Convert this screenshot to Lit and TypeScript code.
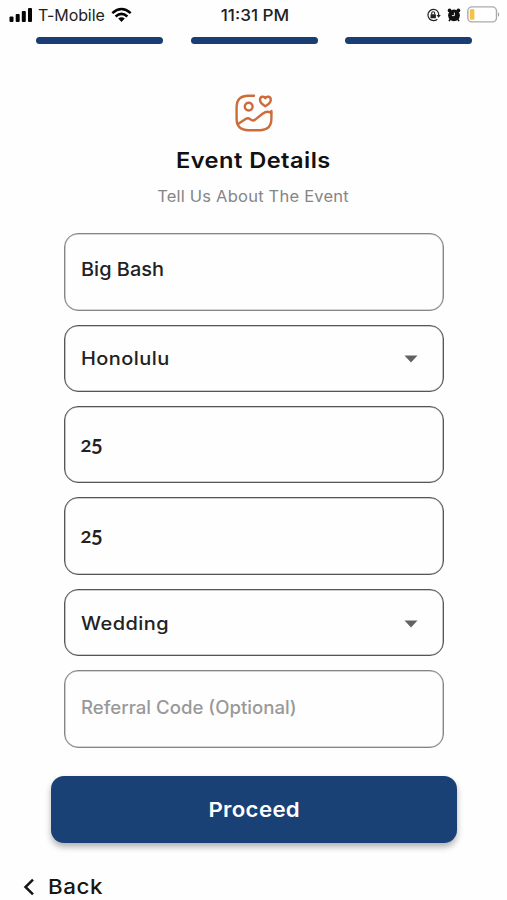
import { LitElement, html, css } from "lit";
import { customElement, property } from "lit/decorators.js";

@customElement("status-bar")
class StatusBar extends LitElement {
  static styles = css`
    :host { display: grid; flex: none; grid-template-columns: 1fr auto 1fr; align-items: center; height: 29px; padding: 0 7px 0 9px; box-sizing: border-box; font: 400 16px/20px Inter, sans-serif; color: #222; }
    .side { display: flex; align-items: center; }
    .carrier { margin: 0 6px 0 5px; letter-spacing: -0.1px; }
    .time { font-weight: 500; transform: scaleX(1.07); }
    .right { justify-content: flex-end; }
    svg { display: block; }
    .lock { margin-right: 6px; }
    .alarm { margin-right: 6px; }
  `;
  render() {
    return html`
      <div class="side">
        <svg width="24" height="16" viewBox="0 0 24 16" fill="#050505">
          <rect x="0.5" y="9.5" width="4" height="5.5" rx="1" /><rect x="6.7" y="7" width="4" height="8" rx="1" />
          <rect x="12.8" y="4" width="4" height="11" rx="1" /><rect x="19" y="1" width="4" height="14" rx="1" />
        </svg>
        <span class="carrier">T-Mobile</span>
        <svg width="21" height="16" viewBox="0 0 21 16" fill="none" stroke="#050505" stroke-width="2.5">
          <path d="M1.3 6.1Q10.5 -2.1 19.7 6.1" /><path d="M4.6 9.5Q10.5 4.3 16.4 9.5" />
          <path d="M7.2 11.6Q10.5 8.8 13.8 11.6L10.5 15Z" fill="#050505" stroke="none" />
        </svg>
      </div>
      <span class="time">11:31 PM</span>
      <div class="side right">
        <svg class="lock" width="15" height="14" viewBox="0 0 15 14" fill="none" stroke="#222">
          <path d="M11.2 2.8A5.6 5.6 0 1 0 11.3 11.2M11.2 2.8Q12.9 4.6 12.7 7.4" stroke-width="1.2" />
          <path d="M10.5 7H14.8L12.6 9.8Z" fill="#222" stroke="none" />
          <rect x="4.5" y="6.2" width="5.4" height="4" rx=".5" fill="#222" stroke="none" /><path d="M5.7 6.5V5.2a1.5 1.5 0 0 1 3 0V6.5" stroke-width="1.1" />
        </svg>
        <svg class="alarm" width="14" height="14" viewBox="0 0 14 14" fill="#111">
          <circle cx="7" cy="7.3" r="5.9" /><circle cx="2.6" cy="2.4" r="1.9" /><circle cx="11.4" cy="2.4" r="1.9" />
          <path d="M3.4 11L2 13.1M10.6 11L12 13.1" stroke="#111" stroke-width="1.6" />
          <path d="M7.4 4.6V7.6H4.9" fill="none" stroke="#fff" stroke-width=".9" />
        </svg>
        <svg width="33" height="17" viewBox="0 0 33 17">
          <rect x=".8" y=".9" width="28.7" height="15" rx="4.2" fill="#fff" stroke="#aaa" stroke-width="1.4" />
          <rect x="2.8" y="3" width="4.6" height="10.8" rx="1.6" fill="#f5c247" />
          <path d="M31 6.2Q33.2 8.4 31 10.7Z" fill="#999" />
        </svg>
      </div>`;
  }
}

@customElement("form-field")
class FormField extends LitElement {
  @property() value = "";
  @property() kind = "text";
  static styles = css`
    :host { display: block; }
    .box { box-sizing: border-box; height: 77.7px; border: 1px solid #707070; box-shadow: inset 0 0 0 0.6px #999; border-radius: 14px; padding: 0 25px 0 16px; display: flex; align-items: center; justify-content: space-between; color: #222; }
    .select { height: 67.3px; border-color: #555; padding-top: 2px; font: 500 18px/24px Inter, sans-serif; }
    .text { font: 500 19px/24px Inter, sans-serif; padding-bottom: 4px; }
    .number { border-color: #555; font: 700 20px/24px Lato, sans-serif; }
    .text, .hint { border-color: #858585; box-shadow: inset 0 0 0 0.6px #aaa; }
    .hint { color: #999; font: 500 18px/24px Inter, sans-serif; padding-bottom: 2px; }
    .label, .digits { transform-origin: left; }
    .text .label { transform: scaleX(1.05); }
    .hint .label { transform: scaleX(1.034); }
    .select .label { letter-spacing: 0.4px; transform: scaleX(1.11); }
    .digits { display: flex; align-items: baseline; gap: 0; }
    .low { font-size: 17px; transform: scaleX(1.1); }
    .drop { position: relative; top: 2px; }
  `;
  render() {
    const label =
      this.kind === "number"
        ? html`<span class="digits"><span class="low">${this.value[0]}</span><span class="drop">${this.value.slice(1)}</span></span>`
        : html`<span class="label">${this.value}</span>`;
    return html`<div class="box ${this.kind}">${label}${this.kind === "select"
      ? html`<svg width="14" height="8" viewBox="0 0 14 8"><path d="M.5 .5H13.5L7 7.5Z" fill="#626262" /></svg>`
      : ""}</div>`;
  }
}

@customElement("app-root")
class AppRoot extends LitElement {
  static styles = css`
    :host { display: flex; flex-direction: column; height: 900px; background: #fefefe; font-family: Inter, sans-serif; overflow: hidden; }
    .steps { flex: none; display: grid; grid-template-columns: repeat(3, 1fr); gap: 27.5px; margin: 8px 35px 0 36px; }
    .step { height: 7px; border-radius: 4px; background: #1a3d73; }
    header { display: flex; flex-direction: column; align-items: center; padding-top: 50px; height: 189px; box-sizing: border-box; flex: none; }
    h1 { margin: 14px 0 0; font: 600 21.5px/28px Inter, sans-serif; color: #111; letter-spacing: 0.4px; transform: scaleX(1.1); }
    p { margin: 13px 0 0; font: 400 15.5px/20px Inter, sans-serif; color: #858585; letter-spacing: 0.2px; transform: scaleX(1.065); }
    .fields { flex: none; display: flex; flex-direction: column; gap: 13.9px; margin: 0 63.5px 0 64px; }
    button { border: 0; margin: 28.5px 50.5px 0 51px; height: 67px; border-radius: 13px; background: #194176; color: #fff; font: 600 20.5px/28px Inter, sans-serif; letter-spacing: 0.3px; box-shadow: 0 4px 6px rgba(0, 0, 0, 0.3); flex: none; padding: 0; }
    button span { display: inline-block; transform: scaleX(1.085); }
    .back { flex: none; display: flex; align-items: center; gap: 12.5px; margin: 30px 0 0 23px; font: 500 20.5px/28px Inter, sans-serif; color: #161616; letter-spacing: 0.5px; }
    .back span { transform: scaleX(1.09); transform-origin: left; }
  `;
  render() {
    return html`
      <status-bar></status-bar>
      <div class="steps"><div class="step"></div><div class="step"></div><div class="step"></div></div>
      <header>
        <svg width="38" height="38" viewBox="0 0 38 38" fill="none" stroke="#cd6b3a" stroke-width="2.4" stroke-linecap="round" stroke-linejoin="round">
          <path d="M19 1.8H13.5Q1.6 1.8 1.6 13.5V24.5Q1.6 36.2 13.5 36.2H24.5Q36.4 36.2 36.4 24.5V17" />
          <circle cx="13.7" cy="12.6" r="3.9" />
          <path d="M30.3 12.2C27.5 10.6 25 8.7 25 5.8C25 2.4 28.8 1.7 30.3 4.2C31.8 1.7 35.8 2.4 35.8 5.8C35.8 8.7 33.2 10.6 30.3 12.2Z" />
          <path d="M2.6 30.2L10.6 25Q13.2 23.4 15.4 25.4Q18 27.7 20.8 25.1L27.5 19.7Q32.5 16 36.2 19" />
        </svg>
        <h1>Event Details</h1>
        <p>Tell Us About The Event</p>
      </header>
      <div class="fields">
        <form-field kind="text" value="Big Bash"></form-field>
        <form-field kind="select" value="Honolulu"></form-field>
        <form-field kind="number" value="25"></form-field>
        <form-field kind="number" value="25"></form-field>
        <form-field kind="select" value="Wedding"></form-field>
        <form-field kind="hint" value="Referral Code (Optional)"></form-field>
      </div>
      <button><span>Proceed</span></button>
      <div class="back">
        <svg width="12" height="18" viewBox="0 0 12 18" fill="none" stroke="#161616" stroke-width="2.5"><path d="M10 1.7L2.5 9L10 16.3" /></svg>
        <span>Back</span>
      </div>`;
  }
}
